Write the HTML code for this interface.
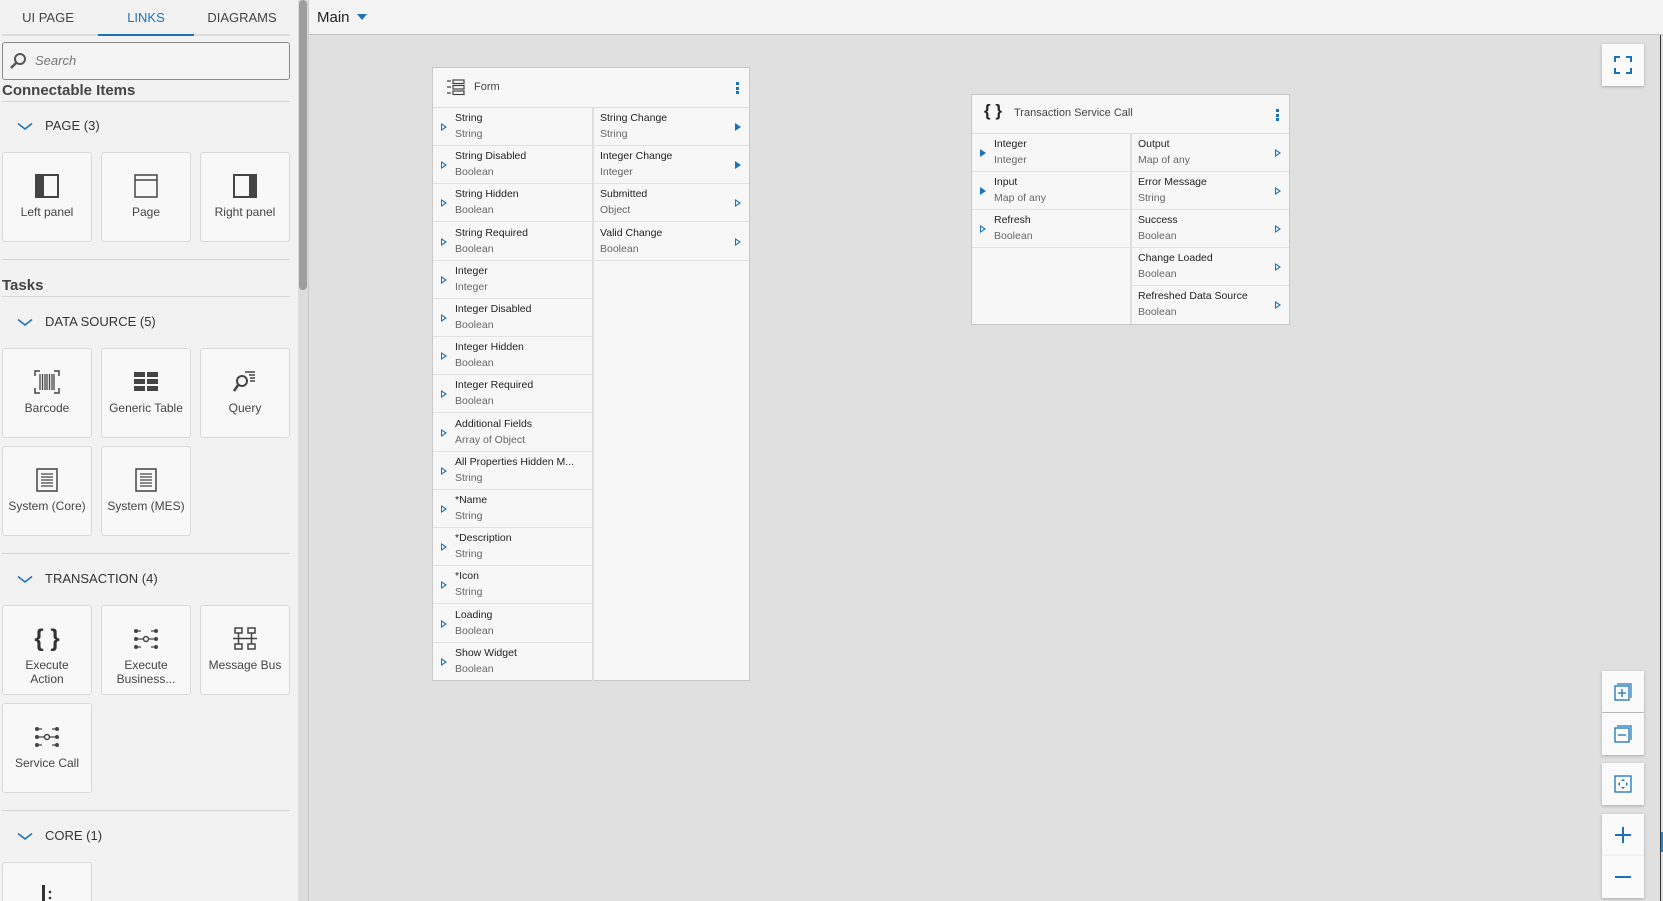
<!DOCTYPE html>
<html style="overflow:hidden;width:1663px;height:901px"><head><meta charset="utf-8">
<style>
*{box-sizing:border-box;margin:0;padding:0}
html,body{overflow:hidden}
body{width:1663px;height:901px;overflow:hidden;background:#f2f2f2;font-family:"Liberation Sans",sans-serif;color:#333;position:relative}
.abs{position:absolute}
.tab{position:absolute;top:10px;font-size:13px;color:#444;width:96px;text-align:center}
.hline{position:absolute;left:2px;width:288px;height:1px;background:#d6d6d6}
.sec{position:absolute;left:45px;font-size:13px;color:#333}
.chev{position:absolute;left:17px}
.h{position:absolute;left:2px;font-size:15px;font-weight:bold;color:#444}
.card{position:absolute;width:90px;height:90px;background:#f8f8f8;border:1px solid #d9d9d9;border-radius:3px;text-align:center;font-size:12px;color:#444;overflow:hidden}
.card .ic{height:30px;margin-top:18px;display:flex;justify-content:center;align-items:center}
.card .lb{line-height:14px;margin-top:4px}
.node{position:absolute;background:#f7f7f7;border:1px solid #c8c8c8}
.nh{height:40px;border-bottom:1px solid #dedede;position:relative;font-size:11px;color:#444}
.row{position:absolute;height:38px;border-bottom:1px solid #e2e2e2;font-size:10.5px}
.row .n{position:absolute;left:22px;top:4px;color:#222}
.row .t{position:absolute;left:22px;top:20px;color:#666}
.tri{position:absolute;top:15px;width:0;height:0;border-top:4px solid transparent;border-bottom:4px solid transparent;border-left:6px solid #1a73b8}
.tri.o::after{content:"";position:absolute;left:-5px;top:-2.5px;border-top:2.5px solid transparent;border-bottom:2.5px solid transparent;border-left:3.5px solid #f7f7f7}
.btn{position:absolute;left:1602px;width:42px;height:42px;background:#fafafa;box-shadow:0 1px 3px rgba(0,0,0,.25);display:flex;align-items:center;justify-content:center}
.dots{position:absolute;top:14px;width:3px}
.dots i{display:block;width:3px;height:3px;background:#1a73b8;margin-bottom:1.5px}
</style></head><body>
<!-- sidebar -->
<div class="tab" style="left:0">UI PAGE</div>
<div class="tab" style="left:98px;color:#1a73b8">LINKS</div>
<div class="tab" style="left:194px">DIAGRAMS</div>
<div class="abs" style="left:2px;top:34px;width:288px;height:2px;background:#ddd"></div>
<div class="abs" style="left:98px;top:34px;width:96px;height:2px;background:#1a73b8"></div>
<div class="abs" style="left:2px;top:42px;width:288px;height:38px;border:1px solid #8a8a8a;border-radius:3px;background:#f4f4f4"></div>
<svg class="abs" style="left:9px;top:52px" width="18" height="18" viewBox="0 0 18 18"><circle cx="11" cy="7" r="5" fill="none" stroke="#555" stroke-width="2"/><path d="M7.5 10.5L2 16" stroke="#555" stroke-width="2.5"/></svg>
<div class="abs" style="left:35px;top:53px;font-size:13px;font-style:italic;color:#777">Search</div>
<div class="h" style="top:82px">Connectable Items</div>
<div class="hline" style="top:101px"></div>
<svg class="chev" style="top:122px" width="16" height="9"><path d="M1 1.5L8 7L15 1.5" fill="none" stroke="#1a73b8" stroke-width="1.6"/></svg><div class="sec" style="top:118px">PAGE (3)</div>
<div class="card" style="left:2px;top:152px"><div class="ic"><svg width="24" height="24"><rect x="1" y="1" width="22" height="22" fill="none" stroke="#444" stroke-width="2"/><rect x="1" y="1" width="8" height="22" fill="#444"/></svg></div><div class="lb">Left panel</div></div>
<div class="card" style="left:101px;top:152px"><div class="ic"><svg width="24" height="24"><rect x="1" y="1" width="22" height="22" fill="none" stroke="#444" stroke-width="1.5"/><path d="M1 6H23" stroke="#444" stroke-width="1.5"/></svg></div><div class="lb">Page</div></div>
<div class="card" style="left:200px;top:152px"><div class="ic"><svg width="24" height="24"><rect x="1" y="1" width="22" height="22" fill="none" stroke="#444" stroke-width="2"/><rect x="16" y="1" width="7" height="22" fill="#444"/></svg></div><div class="lb">Right panel</div></div>
<div class="hline" style="top:259px"></div>
<div class="h" style="top:277px">Tasks</div>
<div class="hline" style="top:296px"></div>
<svg class="chev" style="top:318px" width="16" height="9"><path d="M1 1.5L8 7L15 1.5" fill="none" stroke="#1a73b8" stroke-width="1.6"/></svg><div class="sec" style="top:314px">DATA SOURCE (5)</div>
<div class="card" style="left:2px;top:348px"><div class="ic"><svg width="26" height="24"><path d="M1 6V1h5M20 1h5v5M1 18v5h5M20 23h5v-5" stroke="#444" fill="none" stroke-width="1.5"/><path d="M6 4v16M8.5 4v16M11 4v16M13 4v16M15.5 4v16M18 4v16M20 4v16" stroke="#444" stroke-width="1.3"/></svg></div><div class="lb">Barcode</div></div>
<div class="card" style="left:101px;top:348px"><div class="ic"><svg width="26" height="22"><g fill="#444"><rect x="1" y="1" width="11" height="5"/><rect x="14" y="1" width="11" height="5"/><rect x="1" y="8" width="11" height="5"/><rect x="14" y="8" width="11" height="5"/><rect x="1" y="15" width="11" height="5"/><rect x="14" y="15" width="11" height="5"/></g></svg></div><div class="lb">Generic Table</div></div>
<div class="card" style="left:200px;top:348px"><div class="ic"><svg width="26" height="24"><circle cx="10" cy="11" r="5" fill="none" stroke="#444" stroke-width="2"/><path d="M6.5 14.5L2 21" stroke="#444" stroke-width="2.5"/><path d="M13 2h10M17 5h6M18 8h5M18 11h5" stroke="#444" stroke-width="1.5"/></svg></div><div class="lb">Query</div></div>
<div class="card" style="left:2px;top:446px"><div class="ic"><svg width="22" height="24"><rect x="1" y="1" width="20" height="22" fill="none" stroke="#444" stroke-width="1.5"/><path d="M5 6h12M5 9h12M5 12h12M5 15h12M5 18h12" stroke="#444" stroke-width="1.3"/></svg></div><div class="lb">System (Core)</div></div>
<div class="card" style="left:101px;top:446px"><div class="ic"><svg width="22" height="24"><rect x="1" y="1" width="20" height="22" fill="none" stroke="#444" stroke-width="1.5"/><path d="M5 6h12M5 9h12M5 12h12M5 15h12M5 18h12" stroke="#444" stroke-width="1.3"/></svg></div><div class="lb">System (MES)</div></div>
<div class="hline" style="top:553px"></div>
<svg class="chev" style="top:575px" width="16" height="9"><path d="M1 1.5L8 7L15 1.5" fill="none" stroke="#1a73b8" stroke-width="1.6"/></svg><div class="sec" style="top:571px">TRANSACTION (4)</div>
<div class="card" style="left:2px;top:605px"><div class="ic" style="font-size:24px;font-weight:bold;color:#333">{ }</div><div class="lb">Execute<br>Action</div></div>
<div class="card" style="left:101px;top:605px"><div class="ic"><svg width="26" height="22"><g fill="#444"><circle cx="3" cy="3" r="2"/><circle cx="3" cy="11" r="2"/><circle cx="3" cy="19" r="2"/><circle cx="23" cy="3" r="2"/><circle cx="23" cy="11" r="2"/><circle cx="23" cy="19" r="2"/></g><circle cx="13" cy="11" r="2.5" fill="none" stroke="#444" stroke-width="1.5"/><path d="M3 3h5M3 11h7M16 11h7M3 19h5M18 3h5M18 19h5" stroke="#444" stroke-width="1.3"/></svg></div><div class="lb">Execute<br>Business...</div></div>
<div class="card" style="left:200px;top:605px"><div class="ic"><svg width="26" height="24"><g fill="none" stroke="#444" stroke-width="1.5"><rect x="3" y="1" width="7" height="5"/><rect x="16" y="1" width="7" height="5"/><rect x="3" y="17" width="7" height="5"/><rect x="16" y="17" width="7" height="5"/><path d="M1 11.5h24M6.5 6v11M19.5 6v11"/></g></svg></div><div class="lb">Message Bus</div></div>
<div class="card" style="left:2px;top:703px"><div class="ic"><svg width="26" height="22"><g fill="#444"><circle cx="3" cy="3" r="2"/><circle cx="3" cy="11" r="2"/><circle cx="3" cy="19" r="2"/><circle cx="23" cy="3" r="2"/><circle cx="23" cy="11" r="2"/><circle cx="23" cy="19" r="2"/></g><circle cx="13" cy="11" r="2.5" fill="none" stroke="#444" stroke-width="1.5"/><path d="M3 3h5M3 11h7M16 11h7M3 19h5M18 3h5M18 19h5" stroke="#444" stroke-width="1.3"/></svg></div><div class="lb">Service Call</div></div>
<div class="hline" style="top:810px"></div>
<svg class="chev" style="top:832px" width="16" height="9"><path d="M1 1.5L8 7L15 1.5" fill="none" stroke="#1a73b8" stroke-width="1.6"/></svg><div class="sec" style="top:828px">CORE (1)</div>
<div class="card" style="left:2px;top:862px;height:39px;border-bottom:none;border-radius:3px 3px 0 0"><div class="ic" style="margin-top:15px"><svg width="14" height="24"><rect x="2" y="4" width="3" height="20" fill="#333"/><circle cx="10" cy="11" r="1.3" fill="#333"/><circle cx="10" cy="17" r="1.3" fill="#333"/></svg></div></div>
<!-- sidebar scrollbar -->
<div class="abs" style="left:298px;top:0;width:10px;height:901px;background:#dcdcdc"></div>
<div class="abs" style="left:299px;top:0;width:8px;height:290px;background:#9e9e9e;border-radius:4px"></div>
<!-- canvas -->
<div class="abs" style="left:308px;top:0;width:1355px;height:901px;background:#e0e0e0;border-left:1px solid #c8c8c8"></div>
<div class="abs" style="left:309px;top:0;width:1354px;height:35px;background:#f4f4f4;border-bottom:1px solid #c4c4c4"></div>
<div class="abs" style="left:317px;top:9px;font-size:15px;color:#222">Main</div>
<div class="abs" style="left:357px;top:14px;border-left:5px solid transparent;border-right:5px solid transparent;border-top:6px solid #1a73b8"></div>
<div class="abs" style="left:1660px;top:35px;width:1px;height:866px;background:#333"></div>
<div class="abs" style="left:1661px;top:832px;width:2px;height:20px;background:#1a8be0"></div>

<!-- Form node -->
<div class="node" style="left:432px;top:67px;width:318px;height:614px">
 <div class="nh"><svg class="abs" style="left:13px;top:11px" width="20" height="17"><path d="M1 2h4M1 8h4M1 14h4" stroke="#444" stroke-width="1.3"/><rect x="7" y="1" width="11" height="3.5" fill="none" stroke="#444" stroke-width="1.2"/><rect x="7" y="6.5" width="11" height="3.5" fill="none" stroke="#444" stroke-width="1.2"/><rect x="7" y="12" width="11" height="3.5" fill="none" stroke="#444" stroke-width="1.2"/></svg><span class="abs" style="left:41px;top:13px">Form</span><div class="dots" style="left:303px"><i></i><i></i><i></i></div></div>
 <div class="abs" style="left:159px;top:40px;width:2px;height:574px;background:#dedede"></div>
 <div class="row" style="left:0;top:40px;width:159px"><div class="tri o" style="left:8px"></div><div class="n">String</div><div class="t">String</div></div>
 <div class="row" style="left:0;top:78px;width:159px"><div class="tri o" style="left:8px"></div><div class="n">String Disabled</div><div class="t">Boolean</div></div>
 <div class="row" style="left:0;top:116px;width:159px"><div class="tri o" style="left:8px"></div><div class="n">String Hidden</div><div class="t">Boolean</div></div>
 <div class="row" style="left:0;top:155px;width:159px"><div class="tri o" style="left:8px"></div><div class="n">String Required</div><div class="t">Boolean</div></div>
 <div class="row" style="left:0;top:193px;width:159px"><div class="tri o" style="left:8px"></div><div class="n">Integer</div><div class="t">Integer</div></div>
 <div class="row" style="left:0;top:231px;width:159px"><div class="tri o" style="left:8px"></div><div class="n">Integer Disabled</div><div class="t">Boolean</div></div>
 <div class="row" style="left:0;top:269px;width:159px"><div class="tri o" style="left:8px"></div><div class="n">Integer Hidden</div><div class="t">Boolean</div></div>
 <div class="row" style="left:0;top:307px;width:159px"><div class="tri o" style="left:8px"></div><div class="n">Integer Required</div><div class="t">Boolean</div></div>
 <div class="row" style="left:0;top:346px;width:159px"><div class="tri o" style="left:8px"></div><div class="n">Additional Fields</div><div class="t">Array of Object</div></div>
 <div class="row" style="left:0;top:384px;width:159px"><div class="tri o" style="left:8px"></div><div class="n">All Properties Hidden M...</div><div class="t">String</div></div>
 <div class="row" style="left:0;top:422px;width:159px"><div class="tri o" style="left:8px"></div><div class="n">*Name</div><div class="t">String</div></div>
 <div class="row" style="left:0;top:460px;width:159px"><div class="tri o" style="left:8px"></div><div class="n">*Description</div><div class="t">String</div></div>
 <div class="row" style="left:0;top:498px;width:159px"><div class="tri o" style="left:8px"></div><div class="n">*Icon</div><div class="t">String</div></div>
 <div class="row" style="left:0;top:537px;width:159px"><div class="tri o" style="left:8px"></div><div class="n">Loading</div><div class="t">Boolean</div></div>
 <div class="row" style="left:0;top:575px;width:159px;border-bottom:none"><div class="tri o" style="left:8px"></div><div class="n">Show Widget</div><div class="t">Boolean</div></div>
 <div class="row" style="left:161px;top:40px;width:155px"><div class="n" style="left:6px">String Change</div><div class="t" style="left:6px">String</div><div class="tri" style="left:141px"></div></div>
 <div class="row" style="left:161px;top:78px;width:155px"><div class="n" style="left:6px">Integer Change</div><div class="t" style="left:6px">Integer</div><div class="tri" style="left:141px"></div></div>
 <div class="row" style="left:161px;top:116px;width:155px"><div class="n" style="left:6px">Submitted</div><div class="t" style="left:6px">Object</div><div class="tri o" style="left:141px"></div></div>
 <div class="row" style="left:161px;top:155px;width:155px"><div class="n" style="left:6px">Valid Change</div><div class="t" style="left:6px">Boolean</div><div class="tri o" style="left:141px"></div></div>
</div>

<!-- Transaction node -->
<div class="node" style="left:971px;top:94px;width:319px;height:231px">
 <div class="nh" style="height:39px"><span class="abs" style="left:12px;top:6px;font-size:17px;font-weight:bold;color:#222">{ }</span><span class="abs" style="left:42px;top:12px">Transaction Service Call</span><div class="dots" style="left:304px"><i></i><i></i><i></i></div></div>
 <div class="abs" style="left:158px;top:39px;width:2px;height:190px;background:#dedede"></div>
 <div class="row" style="left:0;top:39px;width:158px"><div class="tri" style="left:8px"></div><div class="n">Integer</div><div class="t">Integer</div></div>
 <div class="row" style="left:0;top:77px;width:158px"><div class="tri" style="left:8px"></div><div class="n">Input</div><div class="t">Map of any</div></div>
 <div class="row" style="left:0;top:115px;width:158px"><div class="tri o" style="left:8px"></div><div class="n">Refresh</div><div class="t">Boolean</div></div>
 <div class="row" style="left:160px;top:39px;width:157px"><div class="n" style="left:6px">Output</div><div class="t" style="left:6px">Map of any</div><div class="tri o" style="left:143px"></div></div>
 <div class="row" style="left:160px;top:77px;width:157px"><div class="n" style="left:6px">Error Message</div><div class="t" style="left:6px">String</div><div class="tri o" style="left:143px"></div></div>
 <div class="row" style="left:160px;top:115px;width:157px"><div class="n" style="left:6px">Success</div><div class="t" style="left:6px">Boolean</div><div class="tri o" style="left:143px"></div></div>
 <div class="row" style="left:160px;top:153px;width:157px"><div class="n" style="left:6px">Change Loaded</div><div class="t" style="left:6px">Boolean</div><div class="tri o" style="left:143px"></div></div>
 <div class="row" style="left:160px;top:191px;width:157px;border-bottom:none"><div class="n" style="left:6px">Refreshed Data Source</div><div class="t" style="left:6px">Boolean</div><div class="tri o" style="left:143px"></div></div>
</div>

<!-- canvas buttons -->
<div class="btn" style="top:44px"><svg width="18" height="18"><path d="M1 6V1h5M12 1h5v5M1 12v5h5M12 17h5v-5" fill="none" stroke="#1a73b8" stroke-width="2"/></svg></div>
<div class="btn" style="top:671px;height:41px"><svg width="18" height="18"><rect x="1" y="3" width="14" height="14" fill="none" stroke="#1a73b8" stroke-width="1.3"/><path d="M3 1h14v14" fill="none" stroke="#1a73b8" stroke-width="1.2"/><path d="M8 6v8M4 10h8" stroke="#1a73b8" stroke-width="1.3"/></svg></div>
<div class="btn" style="top:713px;height:42px"><svg width="18" height="18"><rect x="1" y="3" width="14" height="14" fill="none" stroke="#1a73b8" stroke-width="1.3"/><path d="M3 1h14v14" fill="none" stroke="#1a73b8" stroke-width="1.2"/><path d="M4 10h8" stroke="#1a73b8" stroke-width="1.3"/></svg></div>
<div class="btn" style="top:763px"><svg width="18" height="18"><rect x="1" y="1" width="16" height="16" fill="none" stroke="#1a73b8" stroke-width="1.3"/><path d="M9 4l2 2H7zM9 14l2-2H7zM4 9l2 2V7zM14 9l-2 2V7z" fill="#1a73b8"/></svg></div>
<div class="btn" style="top:814px"><svg width="20" height="20"><path d="M10 2v16M2 10h16" stroke="#1a73b8" stroke-width="2"/></svg></div>
<div class="btn" style="top:856px"><svg width="20" height="20"><path d="M2 10h16" stroke="#1a73b8" stroke-width="2"/></svg></div>
</body></html>
